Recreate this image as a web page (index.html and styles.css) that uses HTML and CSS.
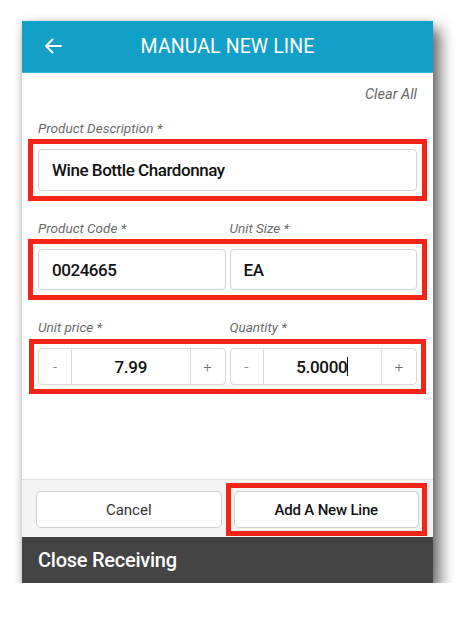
FILE: index.html
```html
<!DOCTYPE html>
<html lang="en">
<head>
<meta charset="utf-8">
<title>Manual New Line</title>
<link rel="stylesheet" href="styles.css">
</head>
<body>
<div class="phone">
  <header class="appbar">
    <span class="back" aria-label="Back">
      <svg width="18" height="16" viewBox="0 0 18 16"><path d="M17 8H2M8.5 1.5L2 8l6.5 6.5" fill="none" stroke="#fff" stroke-width="2" stroke-linecap="round" stroke-linejoin="round"/></svg>
    </span>
    <h1 class="title">MANUAL NEW LINE</h1>
  </header>
  <main class="content">
    <div class="clear-row"><span class="clear">Clear All</span></div>

    <div class="label">Product Description *</div>
    <div class="hl">
      <div class="field">Wine Bottle Chardonnay</div>
    </div>

    <div class="grid labels">
      <div class="label">Product Code *</div>
      <div class="label">Unit Size *</div>
    </div>
    <div class="grid hl">
      <div class="field">0024665</div>
      <div class="field">EA</div>
    </div>

    <div class="grid labels">
      <div class="label">Unit price *</div>
      <div class="label">Quantity *</div>
    </div>
    <div class="grid hl hl-tight">
      <div class="stepper">
        <span class="step minus">-</span>
        <span class="val">7.99</span>
        <span class="step plus">+</span>
      </div>
      <div class="stepper">
        <span class="step minus">-</span>
        <span class="val">5.0000<span class="caret"></span></span>
        <span class="step plus">+</span>
      </div>
    </div>
  </main>
  <div class="actions">
    <button class="btn">Cancel</button>
    <div class="hl-btn">
      <button class="btn primary">Add A New Line</button>
    </div>
  </div>
  <div class="closebar">Close Receiving</div>
</div>
</body>
</html>
```
FILE: styles.css
```css
html, body {
  margin: 0;
  padding: 0;
  background: #ffffff;
}
body {
  font-family: Roboto, "Liberation Sans", sans-serif;
}
.phone {
  margin: 21px 0 0 22px;
  width: 411px;
  height: 562px;
  display: flex;
  flex-direction: column;
  background: #fff;
  box-shadow: 7px 8px 14px rgba(0,0,0,0.6), -1px 0 6px rgba(0,0,0,0.12);
}
.appbar {
  height: 51px;
  background: #12a0c9;
  border-bottom: 1px solid #3cb3da;
  display: flex;
  align-items: center;
  justify-content: center;
  position: relative;
  flex: none;
}
.back {
  position: absolute;
  left: 22px;
  top: 17px;
  width: 18px;
  height: 16px;
  display: block;
}
.back svg { display: block; }
.title {
  margin: 0;
  font-size: 19.5px;
  font-weight: 400;
  color: #fff;
  letter-spacing: 0.1px;
}
.content {
  flex: 1;
  padding: 12px 16px 0 16px;
}
.clear-row {
  display: flex;
  justify-content: flex-end;
  margin-bottom: 14px;
}
.clear {
  font-size: 14.5px;
  line-height: 20px;
  font-style: italic;
  color: #666;
  padding-right: 0;
}
.label {
  font-size: 13.5px;
  line-height: 18px;
  font-style: italic;
  color: #6b6b6b;
  margin-bottom: 12px;
}
.labels {
  margin-top: 28px;
}
.grid {
  display: grid;
  grid-template-columns: 1fr 1fr;
  column-gap: 4px;
}
.hl {
  outline: 5px solid #f42416;
  outline-offset: 5px;
}
.hl-tight {
  outline-offset: 4px;
}
.field {
  height: 40px;
  border: 1px solid #d3d3d3;
  border-radius: 4px;
  padding-left: 13px;
  display: flex;
  align-items: center;
  font-size: 17px;
  font-weight: 500;
  letter-spacing: -0.45px;
  color: #111;
}
.grid .field {
  height: 39px;
}
.stepper {
  height: 35px;
  border: 1px solid #d8d8d8;
  border-radius: 4px;
  display: flex;
}
.step {
  display: flex;
  align-items: center;
  justify-content: center;
  color: #6e6e6e;
  font-size: 15px;
  font-weight: 300;
}
.minus {
  width: 32px;
  border-right: 1px solid #dcdcdc;
}
.plus {
  width: 34px;
  border-left: 1px solid #dcdcdc;
}
.val {
  flex: 1;
  display: flex;
  align-items: center;
  justify-content: center;
  font-size: 17px;
  font-weight: 500;
  letter-spacing: -0.3px;
  color: #111;
}
.caret {
  display: inline-block;
  width: 1px;
  height: 19px;
  background: #111;
  margin-left: 0;
}
.actions {
  flex: none;
  background: #f4f4f4;
  border-top: 1px solid #e2e2e2;
  padding: 11px 14px 9px 14px;
  display: grid;
  grid-template-columns: 1fr 1fr;
  column-gap: 12px;
}
.btn {
  width: 100%;
  height: 37px;
  background: #fff;
  border: 1px solid #cfcfcf;
  border-radius: 5px;
  font-family: Roboto, "Liberation Sans", sans-serif;
  font-size: 15px;
  color: #333;
  padding: 0;
  display: block;
}
.primary {
  font-weight: 500;
  color: #111;
  letter-spacing: -0.2px;
}
.hl-btn {
  outline: 5px solid #f42416;
  outline-offset: 3px;
}
.closebar {
  flex: none;
  height: 46px;
  background: #444;
  color: #fff;
  font-size: 20px;
  font-weight: 500;
  letter-spacing: -0.25px;
  display: flex;
  align-items: center;
  padding-left: 16px;
}
```
